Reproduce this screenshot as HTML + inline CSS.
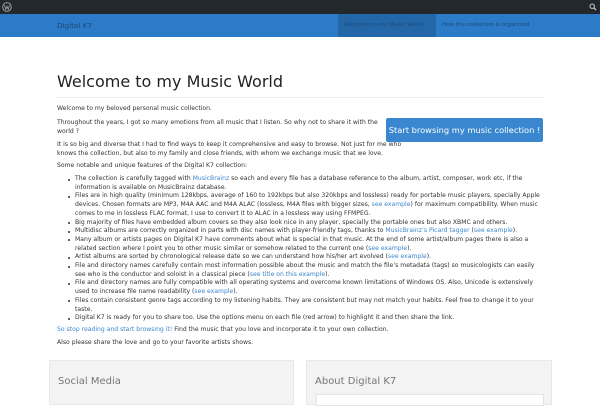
<!DOCTYPE html>
<html><head><meta charset="utf-8"><style>
*{margin:0;padding:0;box-sizing:border-box}
body{width:600px;height:400px;overflow:hidden;background:#fff;font-family:"DejaVu Sans","Liberation Sans",sans-serif;color:#333;position:relative}
.admin{position:absolute;top:0;left:0;width:600px;height:14px;background:#23282d}
.nav{position:absolute;top:14px;left:0;width:600px;height:23px;background:#2b7bc8}
.nav span{position:absolute;top:0;line-height:23px;font-size:6px;color:#1c4a78;white-space:nowrap}
.abs{position:absolute}
h1{position:absolute;left:57px;top:72px;font-size:16px;font-weight:normal;color:#222;white-space:nowrap}
.hr{position:absolute;left:57px;top:97px;width:486px;height:1px;background:#eee}
.t{position:absolute;left:57px;font-size:6.1px;line-height:8.7px;color:#333}
a{color:#3a87cf;text-decoration:none}
ul{position:absolute;left:75px;top:175px;width:470px;font-size:6.1px;line-height:8.7px;list-style:none}
li{position:relative}
li:before{content:"";position:absolute;left:-7px;top:3.5px;width:2px;height:2px;background:#333;border-radius:1px}
.btn{position:absolute;left:386px;top:118px;width:157px;height:24px;background:#3a87cf;border-radius:2px;color:#fff;font-size:8.3px;line-height:24px;text-align:center}
.panel{position:absolute;top:360px;height:45px;background:#f3f3f3;border:1px solid #e8e8e8}
.panel h3{position:absolute;left:8px;top:15px;font-size:10px;font-weight:normal;color:#777;white-space:nowrap}
</style></head><body>
<div class="admin">
<svg class="abs" style="left:2px;top:2px" width="10" height="10" viewBox="0 0 10 10"><circle cx="5" cy="5" r="4.3" fill="none" stroke="#aaa" stroke-width="0.9"/><path d="M2.5 3.3 L3.8 7.3 L5 4.2 L6.2 7.3 L7.5 3.3" fill="none" stroke="#aaa" stroke-width="0.8"/></svg>
<svg class="abs" style="left:589px;top:3px" width="8" height="8" viewBox="0 0 8 8"><circle cx="3.2" cy="3.2" r="2.2" fill="none" stroke="#ccc" stroke-width="1"/><path d="M4.8 4.8 L7 7" stroke="#ccc" stroke-width="1.3"/></svg>
</div>
<div class="nav">
<span style="left:57px;font-size:7.2px">Digital K7</span>
<div class="abs" style="left:338px;top:0;width:98px;height:23px;background:#2467a8"></div>
<span style="left:344px;font-size:5.6px">Welcome to my Music World</span>
<span style="left:442px;font-size:5.6px">How the collection is organized</span>
</div>
<h1>Welcome to my Music World</h1>
<div class="hr"></div>
<div class="t" style="top:105px">Welcome to my beloved personal music collection.</div>
<div class="t" style="top:119px;width:325px">Throughout the years, I got so many emotions from all music that I listen. So why not to share it with the world ?</div>
<div class="t" style="top:141px;width:345px">It is so big and diverse that I had to find ways to keep it comprehensive and easy to browse. Not just for me who knows the collection, but also to my family and close friends, with whom we exchange music that we love.</div>
<div class="btn">Start browsing my music collection !</div>
<div class="t" style="top:162px">Some notable and unique features of the Digital K7 collection:</div>
<ul>
<li>The collection is carefully tagged with <a>MusicBrainz</a> so each and every file has a database reference to the album, artist, composer, work etc, if the information is available on MusicBrainz database.</li>
<li>Files are in high quality (minimum 128kbps, average of 160 to 192kbps but also 320kbps and lossless) ready for portable music players, specially Apple devices. Chosen formats are MP3, M4A AAC and M4A ALAC (lossless, M4A files with bigger sizes, <a>see example</a>) for maximum compatibility. When music comes to me in lossless FLAC format, I use to convert it to ALAC in a lossless way using FFMPEG.</li>
<li>Big majority of files have embedded album covers so they also look nice in any player, specially the portable ones but also XBMC and others.</li>
<li>Multidisc albums are correctly organized in parts with disc names with player-friendly tags, thanks to <a>MusicBrainz’s Picard tagger</a> (<a>see example</a>).</li>
<li>Many album or artists pages on Digital K7 have comments about what is special in that music. At the end of some artist/album pages there is also a related section where I point you to other music similar or somehow related to the current one (<a>see example</a>).</li>
<li>Artist albums are sorted by chronological release date so we can understand how his/her art evolved (<a>see example</a>).</li>
<li>File and directory names carefully contain most information possible about the music and match the file’s metadata (tags) so musicologists can easily see who is the conductor and soloist in a classical piece (<a>see title on this example</a>).</li>
<li>File and directory names are fully compatible with all operating systems and overcome known limitations of Windows OS. Also, Unicode is extensively used to increase file name readability (<a>see example</a>).</li>
<li>Files contain consistent genre tags according to my listening habits. They are consistent but may not match your habits. Feel free to change it to your taste.</li>
<li>Digital K7 is ready for you to share too. Use the options menu on each file (red arrow) to highlight it and then share the link.</li>
</ul>
<div class="t" style="top:326px"><a>So stop reading and start browsing it!</a> Find the music that you love and incorporate it to your own collection.</div>
<div class="t" style="top:339px">Also please share the love and go to your favorite artists shows.</div>
<div class="panel" style="left:49px;width:245px"><h3>Social Media</h3></div>
<div class="panel" style="left:306px;width:246px"><h3>About Digital K7</h3><div class="abs" style="left:9px;top:33px;width:228px;height:12px;background:#fff;border:1px solid #e5e5e5"></div></div>
</body></html>
